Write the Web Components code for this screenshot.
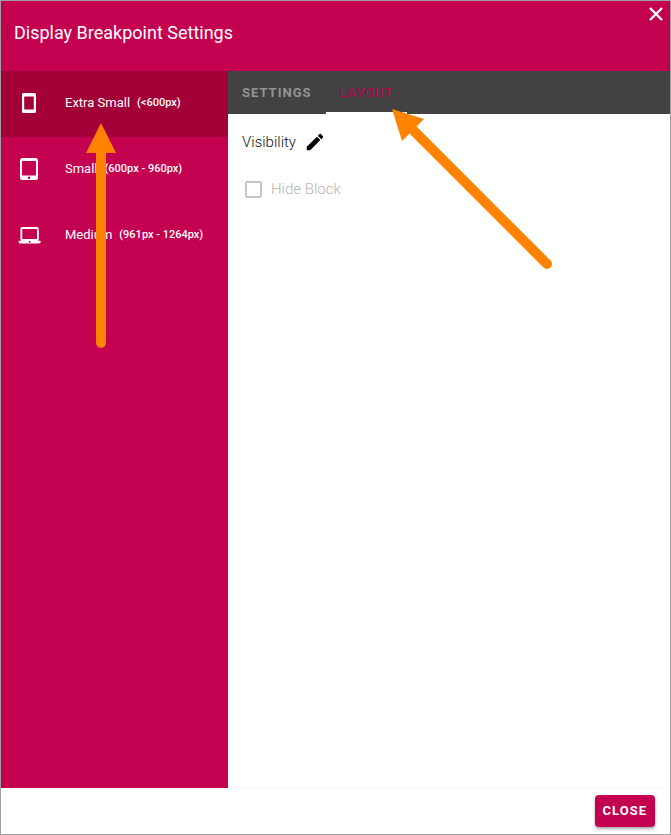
<!DOCTYPE html>
<html lang="en">
<head>
<meta charset="utf-8">
<title>Display Breakpoint Settings</title>
<style>
  body { margin: 0; font-family: Roboto, "Liberation Sans", sans-serif; --brand: #c40050; --brand-dark: #a40038; --bar: #424242; }
</style>
</head>
<body>
<settings-dialog>
  <span slot="title">Display Breakpoint Settings</span>
  <breakpoint-item slot="nav" icon="phone" active>Extra Small<span slot="range">(&lt;600px)</span></breakpoint-item>
  <breakpoint-item slot="nav" icon="tablet">Small<span slot="range">(600px - 960px)</span></breakpoint-item>
  <breakpoint-item slot="nav" icon="laptop">Medium<span slot="range">(961px - 1264px)</span></breakpoint-item>
  <tab-bar></tab-bar>
  <visibility-panel></visibility-panel>
</settings-dialog>
<callout-arrows></callout-arrows>

<script>
function define(name, html, setup) {
  customElements.define(name, class extends HTMLElement {
    constructor() {
      super();
      this.attachShadow({ mode: "open" }).innerHTML = html;
    }
    connectedCallback() {
      if (setup) setup(this, this.shadowRoot);
    }
  });
}

const icons = {
  phone: '<path fill-rule="evenodd" d="M6.500 2h11A1.500 1.500 0 0 1 19 3.500v17a1.500 1.500 0 0 1-1.500 1.500h-11A1.500 1.500 0 0 1 5 20.500v-17A1.500 1.500 0 0 1 6.500 2ZM7.200 5.500v13h9.600v-13Z"/>',
  tablet: '<path fill-rule="evenodd" d="M19 18.500H5V4h14m-7 18a1.200 1.200 0 0 1-1.200-1.200 1.200 1.200 0 0 1 2.400 0A1.200 1.200 0 0 1 12 22m6.500-21h-13A2.500 2.500 0 0 0 3 3.500v17A2.500 2.500 0 0 0 5.500 23h13a2.500 2.500 0 0 0 2.500-2.500v-17A2.500 2.500 0 0 0 18.500 1Z"/>',
  laptop: '<path fill-rule="evenodd" transform="translate(1.600 1.300) scale(.92)" d="M20 18a2 2 0 0 0 2-2V5a2 2 0 0 0-2-2H4a2 2 0 0 0-2 2v11a2 2 0 0 0 2 2H0v1a2 2 0 0 0 2 2h20a2 2 0 0 0 2-2v-1h-4M4 5h16v11H4V5m8 15a1 1 0 1 1 0-2 1 1 0 0 1 0 2Z"/>'
};

define("breakpoint-item", `
  <style>
    :host { display: block; }
    button { display: flex; align-items: center; width: 100%; height: 66px; padding: 0 16px 2px; border: 0; background: none; color: #fff; font: 400 13px/20px Roboto, sans-serif; text-align: left; white-space: nowrap; }
    :host([active]) button { background: var(--brand-dark); }
    svg { width: 24px; height: 24px; margin-right: 24px; fill: currentColor; }
    .range { margin-left: 7px; font-size: 11px; font-weight: 500; }
  </style>
  <button type="button"><svg viewBox="0 0 24 24" aria-hidden="true"></svg><span><slot></slot></span><span class="range"><slot name="range"></slot></span></button>`,
  (host, root) => { root.querySelector("svg").innerHTML = icons[host.getAttribute("icon")]; });

define("tab-bar", `
  <style>
    :host { display: block; background: var(--bar); }
    nav { display: flex; height: 43px; }
    button { box-sizing: border-box; padding: 2px 14px 0; border: 0; border-bottom: 2px solid transparent; background: none; color: #939393; font: 700 13px/20px Roboto, sans-serif; letter-spacing: 1px; }
    [aria-selected=true] { border-color: #fff; color: var(--brand); font-weight: 400; }
  </style>
  <nav role="tablist"><button role="tab" aria-selected="false">SETTINGS</button><button role="tab" aria-selected="true">LAYOUT</button></nav>`);

define("visibility-panel", `
  <style>
    :host { display: block; padding: 16px 14px; font-weight: 300; }
    .heading { display: flex; align-items: center; gap: 8px; height: 24px; font-size: 15px; color: #111; }
    h2 { margin: 0; font: inherit; }
    button { display: flex; padding: 0; border: 0; background: none; }
    svg { width: 22px; height: 22px; }
    label { display: flex; align-items: center; gap: 9px; height: 24px; margin: 23px 0 0 3px; font-size: 15px; color: #b4b4b4; }
    input { appearance: none; box-sizing: border-box; width: 17px; height: 17px; margin: 0; border: 2px solid #c6c6c6; border-radius: 2px; }
  </style>
  <div class="heading"><h2>Visibility</h2><button type="button" aria-label="Edit visibility"><svg viewBox="0 0 24 24"><path d="M20.710 7.040c.390-.390.390-1.040 0-1.410l-2.340-2.340c-.370-.390-1.020-.390-1.410 0l-1.840 1.830 3.750 3.750M3 17.250V21h3.750L17.810 9.930l-3.750-3.750L3 17.250Z"/></svg></button></div>
  <label><input type="checkbox" disabled>Hide Block</label>`);

define("settings-dialog", `
  <style>
    :host { box-sizing: border-box; display: grid; grid-template-rows: 70px 1fr 46px; min-height: 100vh; border: 1px solid #a0a0a0; background: #fff; }
    header { display: flex; justify-content: space-between; align-items: flex-start; background: var(--brand); color: #fff; }
    h1 { margin: 0; padding: 20px 13px; font-size: 18px; line-height: 24px; font-weight: 400; }
    .x { display: flex; padding: 6px 7px; border: 0; background: none; }
    .x svg { width: 14px; height: 14px; }
    .body { display: grid; grid-template-columns: 227px 1fr; }
    nav { background: var(--brand); }
    main { border-bottom: 1px solid #f6f6f6; }
    footer { display: flex; justify-content: flex-end; align-items: center; padding: 0 15px; }
    .close { height: 32px; padding: 0 8px; border: 0; border-radius: 4px; background: var(--brand); color: #fff; font: 700 13px/20px Roboto, sans-serif; letter-spacing: 1px; box-shadow: 0 2px 3px #0005; }
  </style>
  <header><h1><slot name="title"></slot></h1><button class="x" type="button" aria-label="Close"><svg viewBox="0 0 14 14"><path d="M1 1 13 13M13 1 1 13" stroke="#fff" stroke-width="2.400"/></svg></button></header>
  <div class="body"><nav><slot name="nav"></slot></nav><main><slot></slot></main></div>
  <footer><button class="close" type="button">CLOSE</button></footer>`);

define("callout-arrows", `
  <style>
    :host { position: absolute; top: 123px; left: 86px; pointer-events: none; }
    svg { display: block; width: 468px; height: 227px; fill: #ff8200; stroke: #ff8200; }
  </style>
  <svg viewBox="86 123 468 227" aria-hidden="true" overflow="visible">
    <g stroke="none"><path d="M101 123 116 153H86Z"/><path d="M392 109 424 119 402 141Z"/></g>
    <path d="M101 150V343M410 127 547 264" stroke-width="10" stroke-linecap="round"/>
  </svg>`);
</script>
</body>
</html>
